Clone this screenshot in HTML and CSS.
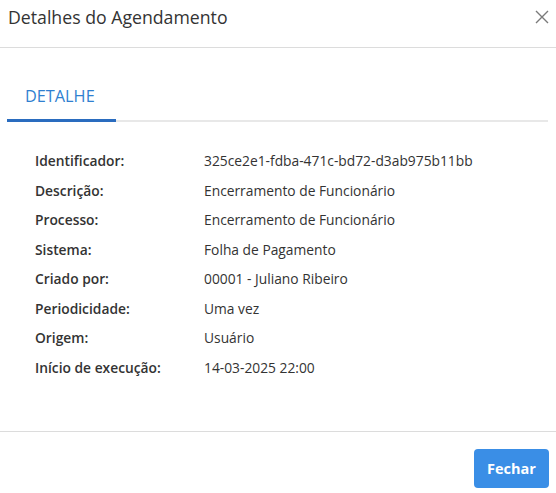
FILE: index.html
```html
<!DOCTYPE html>
<html lang="pt">
<head>
<meta charset="utf-8">
<link rel="stylesheet" href="styles.css">
</head>
<body>
<div class="modal">
  <div class="header">
    <div class="title">Detalhes do Agendamento</div>
    <button class="close" aria-label="Fechar">
      <svg width="14" height="14" viewBox="0 0 14 14"><path d="M1 1L13 13M13 1L1 13" stroke="#7a7a7a" stroke-width="1.4" fill="none"/></svg>
    </button>
  </div>
  <div class="body">
    <div class="tabs">
      <div class="tab active">DETALHE</div>
    </div>
    <div class="details">
      <div class="row"><span class="label">Identificador:</span><span class="value">325ce2e1-fdba-471c-bd72-d3ab975b11bb</span></div>
      <div class="row"><span class="label">Descrição:</span><span class="value">Encerramento de Funcionário</span></div>
      <div class="row"><span class="label">Processo:</span><span class="value">Encerramento de Funcionário</span></div>
      <div class="row"><span class="label">Sistema:</span><span class="value">Folha de Pagamento</span></div>
      <div class="row"><span class="label">Criado por:</span><span class="value">00001 - Juliano Ribeiro</span></div>
      <div class="row"><span class="label">Periodicidade:</span><span class="value">Uma vez</span></div>
      <div class="row"><span class="label">Origem:</span><span class="value">Usuário</span></div>
      <div class="row"><span class="label">Início de execução:</span><span class="value">14-03-2025 22:00</span></div>
    </div>
  </div>
  <div class="footer">
    <button class="btn">Fechar</button>
  </div>
</div>
</body>
</html>
```
FILE: styles.css
```css
* { box-sizing: border-box; }
html, body { margin: 0; padding: 0; background: #fff; }
body { font-family: "Open Sans", "Noto Sans", sans-serif; color: #333; }
.modal { width: 556px; height: 493px; display: flex; flex-direction: column; }
.header {
  height: 48px;
  border-bottom: 1px solid #dcdcdc;
  display: flex; align-items: center; justify-content: space-between;
  padding: 0 7px 13px 8px;
}
.title { font-size: 17.7px; color: #333; line-height: 24px; }
.close { background: none; border: 0; padding: 0; width: 14px; height: 14px; display: flex; }
.body { flex: 1; padding: 27px 8px 0 7px; }
.tabs { display: flex; border-bottom: 2px solid #e8e8e8; }
.tab {
  width: 109px; height: 47px; padding-left: 18px; display: flex; align-items: center;
  font-size: 16.3px; color: #2f7fd0; margin-bottom: -2px;
  padding-bottom: 3px;
}
.tab.active { border-bottom: 3px solid #2a6cbf; }
.details { padding: 24px 0 0 28px; display: flex; flex-direction: column; }
.row { display: flex; height: 29.5px; align-items: center; font-size: 13.8px; }
.label { width: 169px; font-weight: 600; color: #333; }
.value { color: #333; }
.footer {
  height: 62px; border-top: 1px solid #dcdcdc;
  display: flex; justify-content: flex-end; align-items: flex-start;
  padding: 17px 7px 0 0;
}
.btn {
  width: 75px; height: 39px; border: 0; border-radius: 4px;
  background: #3a8ee6; color: #fff; font-family: "Open Sans", sans-serif;
  font-weight: 700; font-size: 14.5px;
}
```
